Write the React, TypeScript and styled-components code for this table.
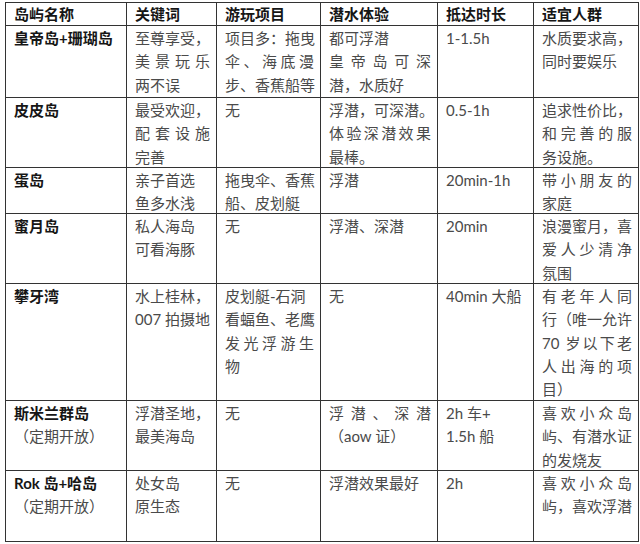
import React from "react";
import styled, { createGlobalStyle } from "styled-components";

const GlobalStyle = createGlobalStyle`
  html, body {
    margin: 0;
    padding: 0;
    background: #ffffff;
  }
  body {
    font-family: "Lato", "Noto Sans CJK SC", sans-serif;
  }
`;

const Page = styled.div`
  width: 640px;
  height: 544px;
  padding: 2px 0 0 5px;
  box-sizing: border-box;
`;

const Table = styled.div`
  display: grid;
  grid-template-columns: 121px 90px 104px 117px 96px 105px;
  grid-template-rows: 23px 72px 70px 46px 70px 117px 70px 71px;
  width: 634px;
  border-top: 1px solid #333333;
  border-left: 1px solid #333333;
  box-sizing: border-box;
`;

const Cell = styled.div<{ $head?: boolean }>`
  border-right: 1px solid #333333;
  border-bottom: 1px solid #333333;
  padding: ${({ $head }) => ($head ? "0" : "1px")} 6px 0 8px;
  box-sizing: border-box;
  font-size: 15px;
  line-height: 23.3px;
  min-width: 0;
`;

const Line = styled.div<{ $spread?: boolean; $bold?: boolean }>`
  color: ${({ $bold }) => ($bold ? "#161616" : "#4a4a4a")};
  font-weight: ${({ $bold }) => ($bold ? 700 : 400)};
  white-space: ${({ $spread }) => ($spread ? "normal" : "nowrap")};
  text-align: ${({ $spread }) => ($spread ? "justify" : "left")};
  text-align-last: ${({ $spread }) => ($spread ? "justify" : "auto")};
`;

// "~" at the start of a line = line is spread to the full cell width (Word justify)
const header = ["岛屿名称", "关键词", "游玩项目", "潜水体验", "抵达时长", "适宜人群"];

const rows: string[][] = [
  [
    "皇帝岛+珊瑚岛",
    "至尊享受，\n~美景玩乐\n两不误",
    "项目多：拖曳\n~伞、海底漫\n步、香蕉船等",
    "都可浮潜\n~皇帝岛可深\n潜，水质好",
    "1-1.5h",
    "水质要求高，\n同时要娱乐",
  ],
  [
    "皮皮岛",
    "最受欢迎，\n~配套设施\n完善",
    "无",
    "浮潜，可深潜。\n~体验深潜效果\n最棒。",
    "0.5-1h",
    "追求性价比，\n~和完善的服\n务设施。",
  ],
  [
    "蛋岛",
    "亲子首选\n鱼多水浅",
    "拖曳伞、香蕉\n船、皮划艇",
    "浮潜",
    "20min-1h",
    "~带小朋友的\n家庭",
  ],
  [
    "蜜月岛",
    "私人海岛\n可看海豚",
    "无",
    "浮潜、深潜",
    "20min",
    "浪漫蜜月，喜\n~爱人少清净\n氛围",
  ],
  [
    "攀牙湾",
    "水上桂林，\n007 拍摄地",
    "皮划艇-石洞\n看蝠鱼、老鹰\n~发光浮游生\n物",
    "无",
    "40min 大船",
    "~有老年人同\n行（唯一允许\n~70 岁以下老\n~人出海的项\n目）",
  ],
  [
    "斯米兰群岛\n（定期开放）",
    "浮潜圣地，\n最美海岛",
    "无",
    "~浮潜、深潜\n（aow 证）",
    "2h 车+\n1.5h 船",
    "~喜欢小众岛\n屿、有潜水证\n的发烧友",
  ],
  [
    "Rok 岛+哈岛\n（定期开放）",
    "处女岛\n原生态",
    "无",
    "浮潜效果最好",
    "2h",
    "~喜欢小众岛\n屿，喜欢浮潜",
  ],
];

const renderLines = (text: string, firstBold: boolean) =>
  text.split("\n").map((raw, i) => {
    const spread = raw.startsWith("~");
    const content = spread ? raw.slice(1) : raw;
    return (
      <Line key={i} $spread={spread} $bold={firstBold && i === 0}>
        {content}
      </Line>
    );
  });

const App = () => {
  return (
    <Page>
      <GlobalStyle />
      <Table>
        {header.map((h) => (
          <Cell key={h} $head>
            <Line $bold>{h}</Line>
          </Cell>
        ))}
        {rows.map((row, r) =>
          row.map((text, c) => (
            <Cell key={`${r}-${c}`}>{renderLines(text, c === 0)}</Cell>
          ))
        )}
      </Table>
    </Page>
  );
};

export default App;
